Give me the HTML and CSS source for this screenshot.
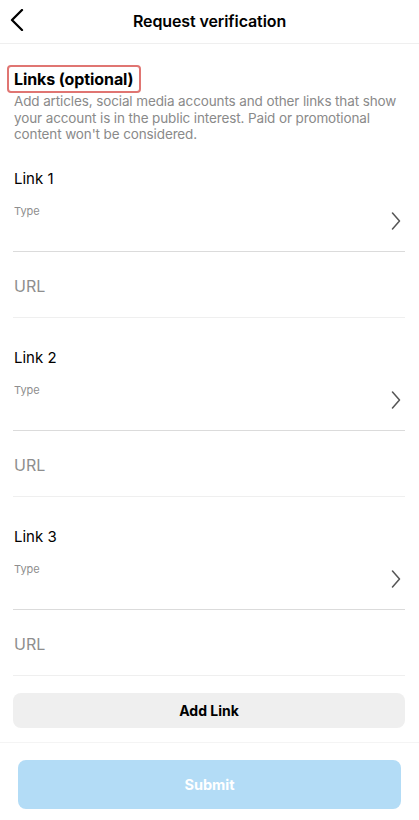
FILE: index.html
```html
<!DOCTYPE html>
<html>
<head>
<meta charset="utf-8">
<link rel="stylesheet" href="styles.css">
</head>
<body>
<div class="screen">
  <header class="header">
    <button class="back" aria-label="Back">
      <svg width="14" height="22" viewBox="0 0 14 22"><polyline points="12,1 2,11 12,21" fill="none" stroke="#000" stroke-width="2.3" stroke-linecap="round" stroke-linejoin="round"/></svg>
    </button>
    <h1 class="title">Request verification</h1>
    <span></span>
  </header>

  <main class="content">
    <div class="section-head"><h2 class="section-title">Links (optional)</h2></div>
    <p class="desc">Add articles, social media accounts and other links that show your account is in the public interest. Paid or promotional content won't be considered.</p>

    <section class="link">
      <div class="link-title">Link 1</div>
      <div class="type-field">
        <span class="type-label">Type</span>
        <svg class="chev" width="10" height="18" viewBox="0 0 10 18"><polyline points="1.5,1 8.5,9 1.5,17" fill="none" stroke="#555" stroke-width="1.5" stroke-linecap="round" stroke-linejoin="round"/></svg>
      </div>
      <div class="url-field">URL</div>
    </section>

    <section class="link">
      <div class="link-title">Link 2</div>
      <div class="type-field">
        <span class="type-label">Type</span>
        <svg class="chev" width="10" height="18" viewBox="0 0 10 18"><polyline points="1.5,1 8.5,9 1.5,17" fill="none" stroke="#555" stroke-width="1.5" stroke-linecap="round" stroke-linejoin="round"/></svg>
      </div>
      <div class="url-field">URL</div>
    </section>

    <section class="link">
      <div class="link-title">Link 3</div>
      <div class="type-field">
        <span class="type-label">Type</span>
        <svg class="chev" width="10" height="18" viewBox="0 0 10 18"><polyline points="1.5,1 8.5,9 1.5,17" fill="none" stroke="#555" stroke-width="1.5" stroke-linecap="round" stroke-linejoin="round"/></svg>
      </div>
      <div class="url-field">URL</div>
    </section>

    <button class="add-link">Add Link</button>
  </main>

  <footer class="footer">
    <button class="submit">Submit</button>
  </footer>
</div>
</body>
</html>
```

FILE: styles.css
```css
* { box-sizing: border-box; }
html, body { margin: 0; padding: 0; background: #fff; }
body {
  font-family: Inter, "Liberation Sans", Arial, sans-serif;
  color: #000;
  width: 419px;
}
.screen { width: 419px; }

.header {
  height: 44px;
  display: grid;
  grid-template-columns: 60px 1fr 60px;
  align-items: center;
  border-bottom: 1px solid #efefef;
}
.back {
  border: 0;
  background: none;
  padding: 0 0 0 10px;
  height: 44px;
  display: flex;
  align-items: center;
  justify-self: start;
  margin-top: -3px;
}
.title {
  margin: 0;
  text-align: center;
  font-size: 16px;
  font-weight: 600;
  letter-spacing: -0.1px;
  margin-top: -2px;
}

.content { padding: 0 14px 0 13px; }

.section-head { padding-top: 21px; }
.section-title {
  display: inline-block;
  margin: 0 0 0 -6px;
  font-size: 16px;
  font-weight: 700;
  line-height: 20px;
  padding: 2px 5px 2px 5px;
  border: 2px solid #e07572;
  border-radius: 4px;
  letter-spacing: -0.1px;
}
.desc {
  margin: 0;
  padding-left: 1px;
  font-size: 13.5px;
  letter-spacing: -0.12px;
  line-height: 16.5px;
  color: #8a8a8a;
}

.link-title {
  padding: 31px 0 0 1px;
  font-size: 15px;
  line-height: 18px;
}
.link:first-of-type .link-title { padding-top: 27px; }
.type-field {
  height: 64px;
  display: flex;
  justify-content: space-between;
  border-bottom: 1px solid #dbdbdb;
}
.type-label {
  padding: 17px 0 0 1px;
  font-size: 11px;
  line-height: 13px;
  color: #8e8e8e;
}
.chev {
  align-self: center;
  margin: 4px 4px 0 0;
}
.url-field {
  height: 66px;
  padding: 24px 0 0 1px;
  font-size: 16px;
  line-height: 20px;
  color: #8e8e8e;
  border-bottom: 1px solid #efefef;
}

.add-link {
  display: block;
  width: 100%;
  margin-top: 17px;
  height: 35px;
  border: 0;
  border-radius: 8px;
  background: #efefef;
  font-family: inherit;
  font-size: 14px;
  font-weight: 700;
  color: #000;
}

.footer {
  margin-top: 14px;
  border-top: 1px solid #f4f4f4;
  padding: 17px 18px 0 18px;
}
.submit {
  display: block;
  width: 100%;
  height: 49px;
  border: 0;
  border-radius: 8px;
  background: #b3dcf6;
  color: #fff;
  font-family: inherit;
  font-size: 14.5px;
  font-weight: 700;
}
```
